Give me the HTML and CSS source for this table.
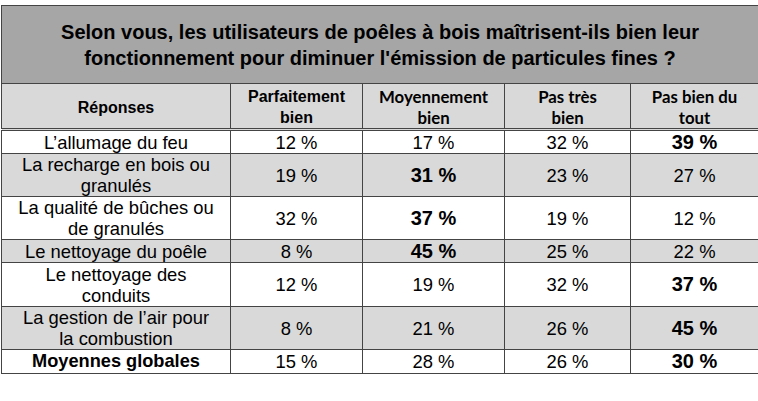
FILE: index.html
```html
<!DOCTYPE html>
<html lang="fr">
<head>
<meta charset="utf-8">
<link rel="stylesheet" href="styles.css">
</head>
<body>
<table class="survey">
  <colgroup>
    <col class="c1"><col class="c2"><col class="c3"><col class="c4"><col class="c5">
  </colgroup>
  <thead>
    <tr class="title-row">
      <th colspan="5" class="title">Selon vous, les utilisateurs de poêles à bois maîtrisent-ils bien leur<br>fonctionnement pour diminuer l'émission de particules fines ?</th>
    </tr>
    <tr class="head-row">
      <th class="h-arial">Réponses</th>
      <th class="h-arial">Parfaitement<br>bien</th>
      <th class="h-cal">Moyennement<br>bien</th>
      <th class="h-cal">Pas très<br>bien</th>
      <th class="h-cal">Pas bien du<br>tout</th>
    </tr>
  </thead>
  <tbody>
    <tr class="r1">
      <td>L’allumage du feu</td><td>12 %</td><td>17 %</td><td>32 %</td><td class="b">39 %</td>
    </tr>
    <tr class="r2 shade">
      <td>La recharge en bois ou<br>granulés</td><td>19 %</td><td class="b">31 %</td><td>23 %</td><td>27 %</td>
    </tr>
    <tr class="r2">
      <td>La qualité de bûches ou<br>de granulés</td><td>32 %</td><td class="b">37 %</td><td>19 %</td><td>12 %</td>
    </tr>
    <tr class="r4 shade">
      <td>Le nettoyage du poêle</td><td>8 %</td><td class="b">45 %</td><td>25 %</td><td>22 %</td>
    </tr>
    <tr class="r5">
      <td>Le nettoyage des<br>conduits</td><td>12 %</td><td>19 %</td><td>32 %</td><td class="b">37 %</td>
    </tr>
    <tr class="r2 shade">
      <td>La gestion de l’air pour<br>la combustion</td><td>8 %</td><td>21 %</td><td>26 %</td><td class="b">45 %</td>
    </tr>
    <tr class="r1">
      <td class="label-b">Moyennes globales</td><td>15 %</td><td>28 %</td><td>26 %</td><td class="b">30 %</td>
    </tr>
  </tbody>
</table>
</body>
</html>
```
FILE: styles.css
```css
html, body {
  margin: 0;
  padding: 0;
  background: #ffffff;
}
body {
  font-family: "Liberation Sans", Arial, sans-serif;
  color: #000;
}
.survey {
  border-collapse: collapse;
  table-layout: fixed;
  width: 757px;
  margin: 5px 0 0 1px;
}
.c1 { width: 229px; }
.c2 { width: 132px; }
.c3 { width: 142px; }
.c4 { width: 126px; }
.c5 { width: 128px; }
.survey th, .survey td {
  border: 1px solid #444;
  padding: 0;
  text-align: center;
  vertical-align: middle;
}
.title-row { height: 78px; }
.title {
  background: #a6a6a6;
  font-size: 20px;
  font-weight: bold;
  line-height: 26px;
  color: #000;
}
.head-row { height: 45px; }
.head-row th {
  background: #d9d9d9;
  border-bottom: 3px double #444;
  font-weight: bold;
  line-height: 21px;
  padding-top: 2px;
}
.h-arial {
  font-family: "Liberation Sans", Arial, sans-serif;
  font-size: 16px;
}
.h-cal {
  font-family: Lato, "Liberation Sans", sans-serif;
  font-size: 16.8px;
}
.survey td {
  font-size: 18.4px;
  line-height: 21px;
}
.r1 { height: 24px; }
.r2 { height: 43px; }
.r4 { height: 23px; }
.r5 { height: 44px; }
.shade td { background: #d9d9d9; }
.survey td.b {
  font-weight: bold;
  font-size: 20px;
}
.survey td.label-b {
  font-weight: bold;
  font-size: 18.2px;
}
```
